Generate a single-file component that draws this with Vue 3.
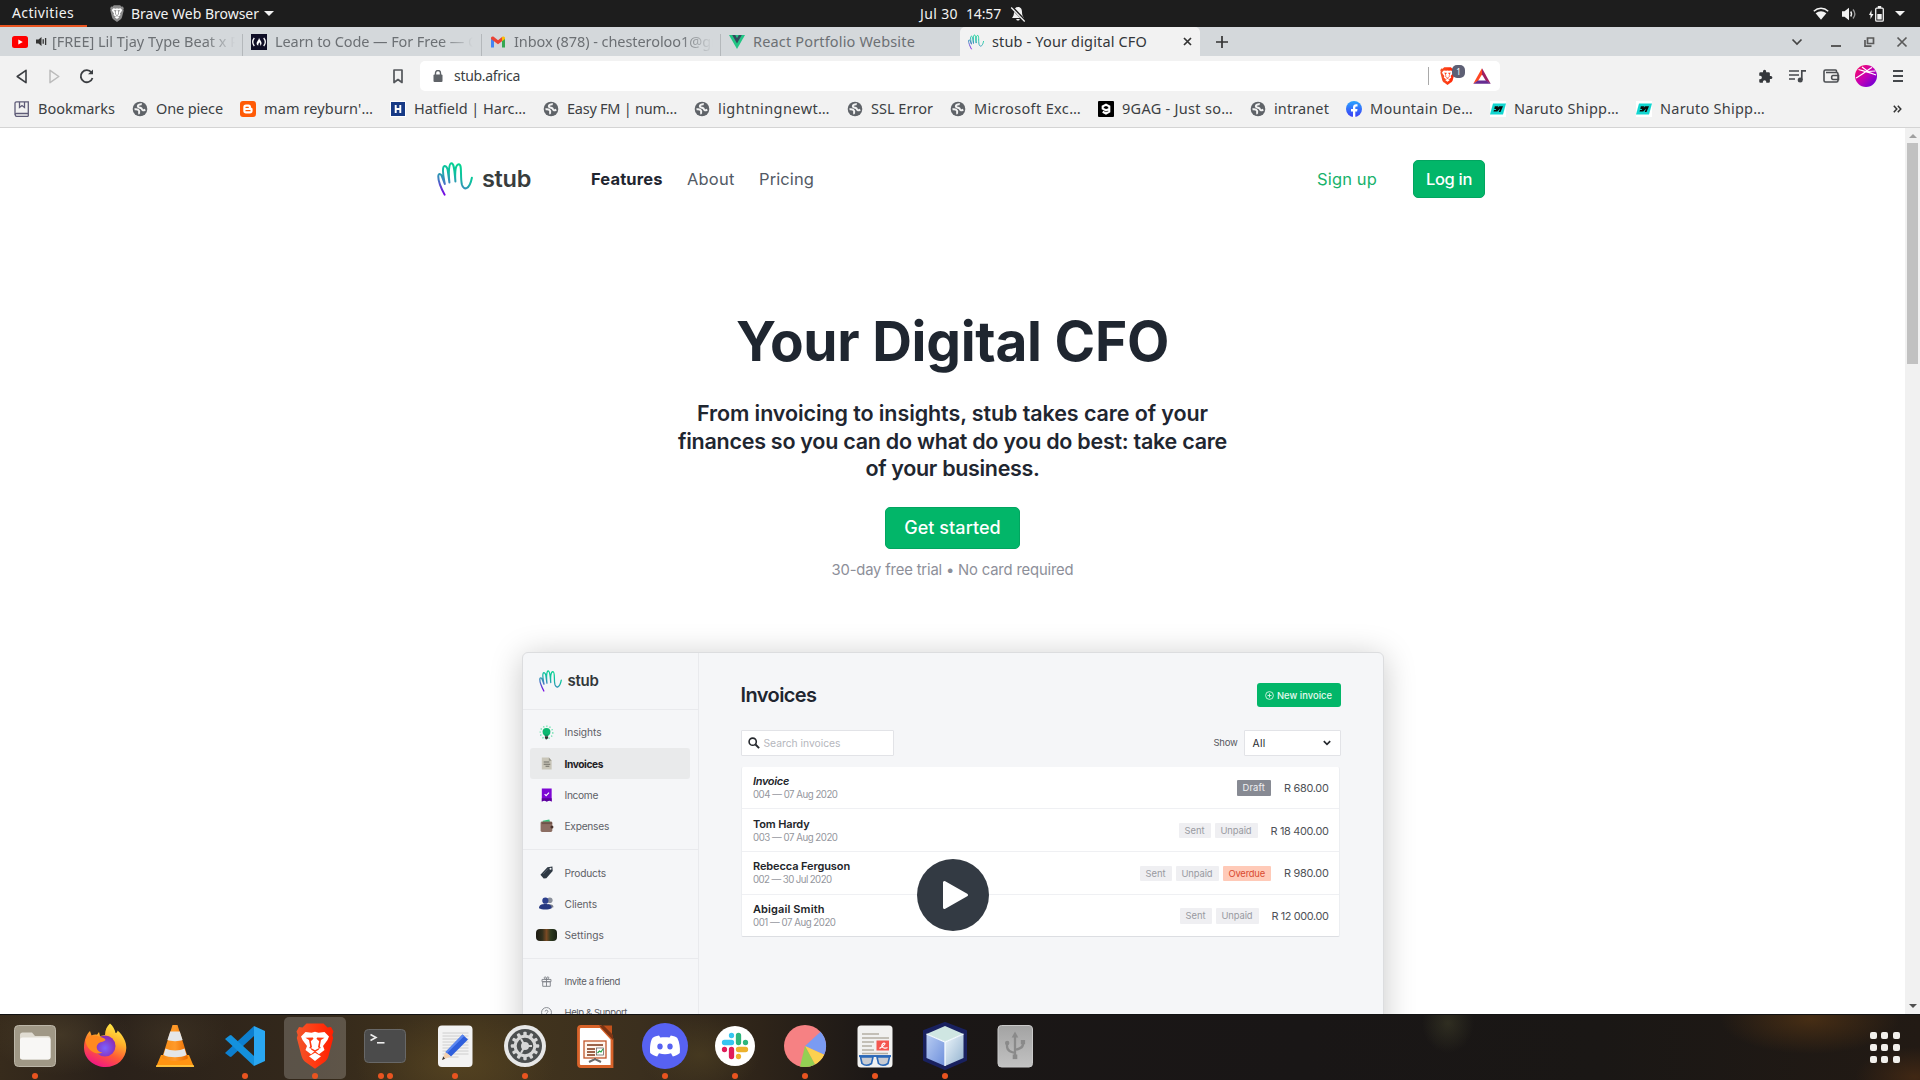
<script setup>
import { nextTick } from 'vue'

// Tracks a label out (or in) so that it takes up the given width.
const vFit = {
  async mounted(el, { value }) {
    await nextTick()
    if (document.fonts) await document.fonts.ready
    const natural = el.getBoundingClientRect().width
    el.style.letterSpacing = `${(value - natural) / el.textContent.trim().length}px`
  }
}

const tabs = [
  { icon: 'youtube', title: '[FREE] Lil Tjay Type Beat x P', w: 187, audio: true },
  { icon: 'fcc', title: 'Learn to Code — For Free — C', w: 202 },
  { icon: 'gmail', title: 'Inbox (878) - chesteroloo1@gr', w: 203 },
  { icon: 'vue', title: 'React Portfolio Website', w: 162, plain: true },
  { icon: 'hand', title: 'stub - Your digital CFO', w: 155, active: true, plain: true }
]

const bookmarks = [
  { icon: 'book', label: 'Bookmarks', w: 77 },
  { icon: 'globe', label: 'One piece', w: 67 },
  { icon: 'blogger', label: "mam reyburn'…", w: 109 },
  { icon: 'hatfield', label: 'Hatfield | Harc…', w: 112 },
  { icon: 'globe', label: 'Easy FM | num…', w: 110 },
  { icon: 'globe', label: 'lightningnewt…', w: 112 },
  { icon: 'globe', label: 'SSL Error', w: 62 },
  { icon: 'globe', label: 'Microsoft Exc…', w: 107 },
  { icon: 'ninegag', label: '9GAG - Just so…', w: 111 },
  { icon: 'globe', label: 'intranet', w: 55 },
  { icon: 'facebook', label: 'Mountain De…', w: 103 },
  { icon: 'naruto', label: 'Naruto Shipp…', w: 105 },
  { icon: 'naruto', label: 'Naruto Shipp…', w: 105 }
]

const sideGroups = [
  [
    { icon: 'bulb', label: 'Insights', w: 37 },
    { icon: 'doc', label: 'Invoices', w: 38.5, active: true },
    { icon: 'income', label: 'Income', w: 33.5 },
    { icon: 'purse', label: 'Expenses', w: 44.5 }
  ],
  [
    { icon: 'tag', label: 'Products', w: 41.5 },
    { icon: 'people', label: 'Clients', w: 32.5 },
    { icon: 'photo', label: 'Settings', w: 39.5 }
  ],
  [
    { icon: 'gift', label: 'Invite a friend', w: 55.5, small: true },
    { icon: 'help', label: 'Help & Support', w: 62.5, small: true }
  ]
]

const SENT = { text: 'Sent', w: 20 }
const UNPAID = { text: 'Unpaid', w: 31 }
const invoices = [
  { name: 'Invoice', nw: 36, italic: true, sub: '004 — 07 Aug 2020', sw: 84.5, tags: [{ text: 'Draft', w: 22.5, kind: 'draft' }], amount: 'R 680.00', aw: 44.5 },
  { name: 'Tom Hardy', nw: 56.5, sub: '003 — 07 Aug 2020', sw: 84.5, tags: [SENT, UNPAID], amount: 'R 18 400.00', aw: 58 },
  { name: 'Rebecca Ferguson', nw: 97, sub: '002 — 30 Jul 2020', sw: 78.5, tags: [SENT, UNPAID, { text: 'Overdue', w: 36.5, kind: 'overdue' }], amount: 'R 980.00', aw: 44.5 },
  { name: 'Abigail Smith', nw: 71.5, sub: '001 — 07 Aug 2020', sw: 82.5, tags: [SENT, UNPAID], amount: 'R 12 000.00', aw: 57 }
]

const dock = [
  { icon: 'd-files', dots: 1 },
  { icon: 'd-firefox', dots: 0 },
  { icon: 'd-vlc', dots: 0 },
  { icon: 'd-code', dots: 1 },
  { icon: 'd-brave', dots: 1, active: true },
  { icon: 'd-term', dots: 2 },
  { icon: 'd-edit', dots: 1 },
  { icon: 'd-gear', dots: 1 },
  { icon: 'd-impress', dots: 0 },
  { icon: 'd-discord', dots: 1 },
  { icon: 'd-slack', dots: 1 },
  { icon: 'd-pie', dots: 1 },
  { icon: 'd-reader', dots: 1 },
  { icon: 'd-cube', dots: 1 },
  { icon: 'd-usb', dots: 0 }
]
const teeth = Array.from({ length: 12 }, (_, i) => i * 30)
</script>

<template>
  <div class="desktop">
    <svg class="sprite" aria-hidden="true">
      <defs>
        <linearGradient id="g-hand" x1="0.7" y1="0" x2="0.15" y2="1">
          <stop offset="0" stop-color="#00d98c" /><stop offset=".35" stop-color="#0fbfa0" />
          <stop offset=".68" stop-color="#3f7fc0" /><stop offset="1" stop-color="#7a00e6" />
        </linearGradient>
        <linearGradient id="g-brave" x1="0" x2="1"><stop offset="0" stop-color="#f1562b" /><stop offset=".5" stop-color="#ff3a12" /><stop offset="1" stop-color="#ff1d00" /></linearGradient>
        <linearGradient id="g-avatar" x1="0" y1="0" x2="1" y2="1"><stop offset="0" stop-color="#ff0a5c" /><stop offset=".5" stop-color="#c500b4" /><stop offset="1" stop-color="#5a00e0" /></linearGradient>
        <linearGradient id="g-fb" x1="0" y1="0" x2="0" y2="1"><stop offset="0" stop-color="#2aa4ff" /><stop offset="1" stop-color="#3d3df5" /></linearGradient>
        <linearGradient id="g-fox" x1=".75" y1="0" x2=".3" y2="1"><stop offset="0" stop-color="#fff04a" /><stop offset=".35" stop-color="#ffb02a" /><stop offset=".65" stop-color="#ff5a36" /><stop offset="1" stop-color="#f0128a" /></linearGradient>
        <radialGradient id="g-orb" cx=".5" cy=".6"><stop offset="0" stop-color="#7a63ff" /><stop offset="1" stop-color="#8a2fb8" /></radialGradient>
        <linearGradient id="g-cone" x1="0" x2="1"><stop offset="0" stop-color="#f58a14" /><stop offset=".5" stop-color="#ff9a2a" /><stop offset="1" stop-color="#e96a00" /></linearGradient>
        <linearGradient id="g-cubeL" x1="0" y1="0" x2="1" y2="1"><stop offset="0" stop-color="#b9cdf2" /><stop offset="1" stop-color="#6d8fdc" /></linearGradient>
        <linearGradient id="g-cubeR" x1="0" y1="0" x2="1" y2="1"><stop offset="0" stop-color="#eef6fb" /><stop offset="1" stop-color="#93b3d0" /></linearGradient>
        <linearGradient id="g-usb" x1="0" y1="0" x2="0" y2="1"><stop offset="0" stop-color="#a3a3a3" /><stop offset="1" stop-color="#c2c2c2" /></linearGradient>
      </defs>

      <symbol id="hand" viewBox="0 0 36 34">
        <path d="M7.6 32.6C4.6 27 1.2 19 1.3 14.4 1.4 11 4 11.4 5 14.6L7.8 22 C6.6 15 4.8 8 6.6 4.8 7.8 3 9.9 4.4 10.6 7.6L12.4 20.4C11.5 12 11.6 1.3 14.4 1.2 17.3 1.2 17.4 9 18.4 19.4 17.8 11 18.2 2.3 21.8 2.2 25.4 2.2 23 15 24.9 22.4 26.6 28.4 32.4 28.6 34.9 15.8" fill="none" stroke="url(#g-hand)" stroke-width="2" stroke-linecap="round" stroke-linejoin="round" />
      </symbol>

      <symbol id="lion-face" viewBox="0 0 38 46">
        <path d="M5 13.500 9.500 9 15.500 9.800 19 8.800l3.500 1L28.500 9l4.500 4.500-1.500 3.500-4.500 6 1.500 4-5.500 4.300-4-3.300-4 3.300L9.500 27l1.500-4-4.500-6zM13 33.300l6-3.500 6 3.500-6 4.700z" fill="#fff" />
        <path d="M9.500 14.800l7.300-.3.700 1.300-2.700 2.400 1.200 5.800-1.500 1.600-1.300-.5 1-1.800-1.200-6.300zM28.500 14.800l-7.300-.3-.7 1.300 2.700 2.400-1.200 5.800 1.500 1.600 1.300-.5-1-1.800 1.200-6.300zM14.500 24.800l4.500 2.400 4.500-2.400-.8 1.900-3.700 2.300-3.700-2.300z" fill="currentColor" />
      </symbol>
      <symbol id="lion" viewBox="0 0 38 46">
        <path d="M10.500 .5h17l4 4 3.500-.5 2.500 4.500-1.200 3.500.9 3-4.700 18c-1 3.500-2.500 5-5 6.800L19 45.800l-8.500-6c-2.500-1.800-4-3.300-5-6.800L.8 15l.9-3L.5 8.500 3 4l3.500.5z" fill="url(#g-brave)" />
        <use href="#lion-face" color="#ff3a12" />
      </symbol>
      <symbol id="lion-grey" viewBox="0 0 38 46">
        <path d="M10.500 .5h17l4 4 3.500-.5 2.500 4.500-1.200 3.500.9 3-4.700 18c-1 3.500-2.500 5-5 6.800L19 45.800l-8.500-6c-2.500-1.800-4-3.300-5-6.800L.8 15l.9-3L.5 8.500 3 4l3.500.5z" fill="#8d8d8d" />
        <use href="#lion-face" color="#777" />
      </symbol>

      <symbol id="youtube" viewBox="0 0 16 16"><rect y="2" width="16" height="12" rx="2.500" fill="#f00" /><path d="M6.300 5.500v5l4.500-2.500z" fill="#fff" /></symbol>
      <symbol id="fcc" viewBox="0 0 16 16"><rect width="16" height="16" fill="#0f0e26" /><path d="M3.300 4C1.300 6.500 1.300 9.500 3.300 12M12.700 4c2 2.500 2 5.500 0 8" stroke="#fff" stroke-width="1.300" fill="none" /><path d="M8 3.800C8.500 6 11 7.500 10.500 9.800 10.200 11 9.600 11.500 9 11.800 9.800 9.800 8.800 9.400 8.400 8.300 7.800 9.500 7 10.200 7.300 11.800 5.600 11 5.200 9.500 6 8c1-1.700 1.800-2.200 2-4.200z" fill="#fff" /></symbol>
      <symbol id="gmail" viewBox="0 0 16 16"><path d="M1 13.500V4l3 2v7.500z" fill="#4285f4" /><path d="M12 13.500V6l3-2v9.500z" fill="#34a853" /><path d="M1 4.500C.8 2.600 2.600 2 4 3l4 3.200L12 3v4.200L8 10.300 4 7.200 1 5z" fill="#ea4335" /><path d="M12 3c1.500-1 3.200-.3 3 1.500V5l-3 2.300z" fill="#fbbc04" /></symbol>
      <symbol id="vue" viewBox="0 0 16 16"><path d="M0 1h16L8 15z" fill="#22c584" /><path d="M3.200 1h3L8 4.200 9.800 1h3L8 9.400z" fill="#35495e" /></symbol>
      <symbol id="speaker" viewBox="0 0 11 11"><path d="M0 3.500h2.500L5.500 1v9l-3-2.500H0z" fill="#333" /><path d="M7.200 3.300v4.400M9.600 2v7" stroke="#333" stroke-width="1.300" /></symbol>

      <symbol id="book" viewBox="0 0 16 16"><path d="M2.500 15.300h11.900M2.500 15.300C1 15.300.7 12.500 2.500 12.500h11.800V.8H2.600C1.600.8 1 1.300 1 2.300V14M14.300 12.500v2.800M5.500 1v5.500L8 4.500l2.500 2V1" fill="none" stroke="#5f5c78" stroke-width="1.300" /></symbol>
      <symbol id="globe" viewBox="0 0 16 16"><circle cx="8" cy="8" r="7.300" fill="#5f6368" /><path d="M9.800 3.300C8 2.800 5.800 4 5.800 5.300c0 1.700 2.500 1.300 3.500 2 .8.700.4 1.700 1.600 2 1 .2 1.600-.3 2.300-.8M2.500 8.300c1.800-.3 4 .2 4.600 1.500.4 1-.6 2.300.4 3.200" stroke="#f2f2f2" stroke-width="2" fill="none" /></symbol>
      <symbol id="blogger" viewBox="0 0 16 16"><rect width="16" height="16" rx="3" fill="#ff5a05" /><path d="M6 3.500h2.500a2.500 2.500 0 0 1 2.500 2.500c0 1.300 1.600.7 1.600 2v1.800a2.700 2.700 0 0 1-2.700 2.700H6a2.700 2.700 0 0 1-2.700-2.700V6.200A2.700 2.700 0 0 1 6 3.500z" fill="#fff" /><path d="M6 6.300h2.300M6 9.700h4" stroke="#ff5a05" stroke-width="1.300" stroke-linecap="round" /></symbol>
      <symbol id="hatfield" viewBox="0 0 16 16"><rect width="16" height="16" fill="#fff" /><rect x="1" y="1" width="14" height="14" fill="#173a86" /><path d="M5.700 4v8M10.300 4v8M5.700 8h4.600" stroke="#fff" stroke-width="1.900" /></symbol>
      <symbol id="ninegag" viewBox="0 0 16 16"><rect width="16" height="16" rx="1" fill="#000" /><path d="M11.300 8 8 9.300 4.700 7.600V5.300L8 3.700l3.300 1.600v5.400L8 12.500l-3.300-1.700" fill="none" stroke="#fff" stroke-width="2.100" /></symbol>
      <symbol id="facebook" viewBox="0 0 16 16"><circle cx="8" cy="8" r="8" fill="url(#g-fb)" /><path d="M7 16v-5.500H5V8h2V6.200C7 4.200 8.300 3.200 10 3.200l1.500.1v2.100h-1C9.600 5.400 9.300 5.900 9.300 6.600V8h2.200l-.4 2.500H9.300V16z" fill="#fff" /></symbol>
      <symbol id="naruto" viewBox="0 0 16 16"><rect width="16" height="16" fill="#fff" /><path d="M3 2.500h13l-3 11H0z" fill="#12d6d0" /><path d="M4.800 5.300h3.500l-.6 1.500 1.500-1.500H13L10.500 11H8.700l1.500-3.500L7.300 10.500H3.500l.5-1.500h1.800l.4-.9H4.300z" fill="#0a0a0a" /></symbol>

      <symbol id="bulb" viewBox="0 0 16 16"><circle cx="8" cy="8" r="6.700" fill="none" stroke="#5fe0a8" stroke-width="1.500" stroke-dasharray="1.200 2.200" /><circle cx="8" cy="7.300" r="4.200" fill="#0bb870" /><path d="M5.500 10h5L9.500 12h-3z" fill="#0a9c60" /><path d="M6.300 12h3.400v2L8 15.500 6.300 14z" fill="#333" /></symbol>
      <symbol id="doc" viewBox="0 0 16 16"><path d="M3 1.500h7.500L13.500 5v9.500H3z" fill="#c9c6b9" /><path d="M10.500 1.500V5h3z" fill="#98968b" /><path d="M5 6.500h6M5 8.700h7M7 11h4" stroke="#6f6d66" stroke-width="1.100" /></symbol>
      <symbol id="income" viewBox="0 0 16 16"><path d="M3 1.500h10.500v14l-2.500-1.200-2.700 1.200-2.800-1.200L3 15.500z" fill="#7d06d4" /><path d="M3 12h10.500v3.500L11 14.300l-2.700 1.200-2.800-1.200L3 15.500z" fill="#5b0299" /><path d="M6 7.500l1.600 1.800L10.700 6" stroke="#fff" stroke-width="1.200" fill="none" /></symbol>
      <symbol id="purse" viewBox="0 0 16 16"><path d="M4 3l7-1.500L12 5H4z" fill="#34c27b" /><rect x="1.700" y="3.800" width="12.500" height="11" rx="1.500" fill="#8c6e63" /><path d="M3 4.500h11v2H3z" fill="#6f5248" /><circle cx="13.800" cy="9.500" r="1.600" fill="#4a322b" /></symbol>
      <symbol id="tag" viewBox="0 0 16 16"><path d="M1.500 10.500 9 2.300l5.300-.6.300 4.800L7.800 14 5 14.500z" fill="#2e3843" /><circle cx="12.300" cy="4" r="1.100" fill="#f5f6f8" /><path d="M4.500 9.500 9.500 4" stroke="#55616e" stroke-width="1" /></symbol>
      <symbol id="people" viewBox="0 0 16 16"><circle cx="11.500" cy="4.500" r="3" fill="#8a8f9b" /><path d="M9 9c4-1 6.500.5 6.500 3L11 13z" fill="#7a7f8c" /><circle cx="6.800" cy="5" r="3.300" fill="#2c3f8c" /><path d="M0 13c0-4 3.500-4.500 6.800-4.500S13.500 9 13.500 13c-3 2-10.500 2-13.500 0z" fill="#263880" /></symbol>
      <symbol id="gift" viewBox="0 0 16 16"><path d="M1.500 5h13v3.300h-13zM2.500 8.300h11V15h-11zM8 5v10M8 5C4 5 4 1.200 6 1.200S8 5 8 5s0-3.800 2-3.800S12 5 8 5z" fill="none" stroke="#7d8087" stroke-width="1.300" /></symbol>
      <symbol id="help" viewBox="0 0 16 16"><circle cx="8" cy="8" r="7.200" fill="none" stroke="#7d8087" stroke-width="1.300" /><path d="M6 6.500C6 4 10 4 10 6.500 10 8 8 8 8 10M8 11v1.300" fill="none" stroke="#7d8087" stroke-width="1.300" /></symbol>

      <symbol id="d-files" viewBox="0 0 48 48"><rect x="3.500" y="3.500" width="41" height="41" rx="4" fill="#a09886" stroke="#bcb6a8" /><path d="M9 13c0-1.500 1-2.500 2.500-2.500H21l3 3.500h13c1.500 0 2.500 1 2.500 2.500V35c0 1.500-1 2.500-2.500 2.500H11.500C10 37.500 9 36.500 9 35z" fill="#e0dcd2" /><rect x="9" y="15.500" width="30.500" height="22" rx="2.500" fill="#f8f7f5" /></symbol>
      <symbol id="d-firefox" viewBox="0 0 48 48"><path d="M29 1.500c3 2.500 5 6.500 5.500 9.500C36 11 36.500 9.500 36.500 8.500 42 13 45.500 20 45.300 26 45 37 36 45 24.500 45S3 37 3 25.500C3 19 5 13 9 9l1.500 4.500c2-1 4-1 5.500-.8L18 10l1 4 5-1C24 8 26 4 29 1.500z" fill="url(#g-fox)" /><circle cx="24" cy="24" r="10.500" fill="url(#g-orb)" /><path d="M4.500 18C7 13 13 12.500 18 14.500c3 1 6 1.500 6.500 3.500-2 2.500-6 1.500-7.500 4-3 3 -.5 8.500 4.500 8.500C15 34 5 28 4.500 18z" fill="#ff8a1f" /></symbol>
      <symbol id="d-vlc" viewBox="0 0 48 48"><path d="M10 33h28l5 12H5z" fill="#ff9412" /><path d="M5.500 43h37l.7 2H5z" fill="#ffc03a" /><path d="M21.500 3h5l10.500 33c-3 4-23 4-26 0z" fill="url(#g-cone)" /><path d="M19.200 9.500h9.600l2.800 8.500c-3 1.500-12 1.500-15.200 0zM14.500 26.500c5 2.500 14.500 2.500 19 0l2 6.500c-5 3-18 3-23 0z" fill="#e4e6e8" /></symbol>
      <symbol id="d-code" viewBox="0 0 48 48"><path d="M33 4 44 9v30l-11 5z" fill="#2aa7f2" /><path d="M33 4v10L10 35 8.500 34.500 4 31z" fill="#0d7fcf" /><path d="M33 44V34L10 13l-1.500.5L4 17z" fill="#1491dd" /></symbol>
      <symbol id="d-brave" viewBox="0 0 48 48"><use href="#lion" x="5" y="1" width="38" height="46" /></symbol>
      <symbol id="d-term" viewBox="0 0 48 48"><rect x="3.500" y="7.500" width="41" height="33" rx="4" fill="#4b4b4b" stroke="#686868" /><path d="M9.500 12.500l5.500 3-5.500 3" fill="none" stroke="#eee" stroke-width="1.600" /><path d="M16 20.800h7.500" stroke="#eee" stroke-width="1.600" /></symbol>
      <symbol id="d-edit" viewBox="0 0 48 48"><rect x="7" y="3.500" width="34.500" height="41.500" rx="4" fill="#f3f3f3" /><path d="M11.500 11h26M11.500 14h26M11.500 17h26M11.500 20h26M11.500 23h26M11.500 26h26M11.500 29h26M11.500 32h26M11.500 35h16" stroke="#c4c4c4" stroke-width=".8" /><path d="M31.500 12.500 37 17.500 20 34.500 14.500 30z" fill="#2f5fdc" /><path d="M14.500 30 20 34.500 11 38z" fill="#f2cfae" /><path d="M12.300 34.500 14 36.800 11 38z" fill="#333" /><path d="M31.500 12.500 14.500 30 16 31.300 33.300 14z" fill="#5b87f0" /></symbol>
      <symbol id="d-gear" viewBox="0 0 48 48">
        <circle cx="24" cy="24" r="21" fill="#e7e7e7" /><circle cx="24" cy="24" r="17" fill="#4c4f50" />
        <rect v-for="a in teeth" :key="a" x="22.300" y="9.800" width="3.400" height="5" rx="1" fill="#d6d6d6" :transform="`rotate(${a} 24 24)`" />
        <circle cx="24" cy="24" r="9.800" fill="none" stroke="#d6d6d6" stroke-width="3" /><circle cx="24" cy="24" r="4" fill="#d6d6d6" /><path d="M24 24h7M24 24l-4 7M24 24l-4-7" stroke="#d6d6d6" stroke-width="2" />
      </symbol>
      <symbol id="d-impress" viewBox="0 0 48 48"><path d="M10 4.500h19.500L41 17v27.500H10c-1.500 0-2.500-1-2.500-2.500V7c0-1.500 1-2.500 2.500-2.500z" fill="#fff" stroke="#d8632a" stroke-width="2.800" /><path d="M32 3.500h9v9z" fill="#c2511b" /><path d="M28 3.500 42 18v-5L32.500 3.500z" fill="#7c3414" /><rect x="13" y="19" width="22" height="17" fill="#fff6ee" stroke="#c0562a" stroke-width="1.300" /><path d="M16 23h16M16 27h8M16 30h8M16 33h8" stroke="#7c3414" stroke-width="1.700" /><rect x="25.500" y="26" width="7" height="7" fill="#fff" stroke="#555" stroke-width=".7" /><path d="M26.500 31l2-2 1.500 1 2-3" stroke="#2aa84a" stroke-width="1.200" fill="none" /><path d="M24 36v2M18 40l6-3 6 3" stroke="#6a6a6a" stroke-width="2" fill="none" /></symbol>
      <symbol id="d-discord" viewBox="0 0 48 48"><circle cx="24" cy="24" r="23" fill="#5762f2" /><path d="M18 13.500c-3 .5-5.500 1.500-6.500 2.500C9 20 8.800 26 9.200 31c2 1.800 4.700 3 7 3.500l1.800-3.300c4 1.300 8 1.300 12 0l1.800 3.300c2.300-.5 5-1.700 7-3.500.6-5-.3-11-2.500-15-1-1-3.500-2-6.500-2.500l-1.300 2c-3-.4-6-.4-9.200 0z" fill="#fff" /><ellipse cx="19" cy="24.500" rx="2.700" ry="3" fill="#5762f2" /><ellipse cx="29" cy="24.500" rx="2.700" ry="3" fill="#5762f2" /></symbol>
      <symbol id="d-slack" viewBox="0 0 48 48"><circle cx="24" cy="24" r="20" fill="#fff" /><g stroke-width="5.300" stroke-linecap="round"><path d="M13.500 20.500h7M20.500 13.500v.1" stroke="#36c5f0" /><path d="M27.500 13.500v7M34.500 20.500v.1" stroke="#2eb67d" /><path d="M27.500 27.500h7M27.500 34.500v.1" stroke="#ecb22e" /><path d="M20.500 27.500v7M13.500 27.500v.1" stroke="#e01e5a" /></g></symbol>
      <symbol id="d-pie" viewBox="0 0 48 48"><circle cx="24" cy="24" r="21" fill="#f68183" /><path d="M24 24 39.500 9.800A21 21 0 0 1 43.200 32.800z" fill="#7a9bf2" /><path d="M24 24 43.200 32.800A21 21 0 0 1 34 42.500z" fill="#fcd14f" /><path d="M24 24 34 42.500A21 21 0 0 1 19 44.400z" fill="#93d053" /></symbol>
      <symbol id="d-reader" viewBox="0 0 48 48"><rect x="6.500" y="3.500" width="35" height="42" rx="3.500" fill="#f1f1f0" /><path d="M11 12h17M11 16h27M11 20h12M11 24h10M11 28h12M11 31.500h26" stroke="#b4afa2" stroke-width="1.500" /><rect x="25.500" y="18.500" width="12.500" height="10" fill="#f4564f" /><path d="M28.500 26.500c1-1 6-3.500 5.500-5-1-1.500-4 1-3 3s4 2 5.500 1" fill="none" stroke="#fff" stroke-width="1.200" /><path d="M8 34h32" stroke="#1d5fb5" stroke-width="1.800" /><path d="M9.500 35h12.500l-1.500 6.500c-3 2-7 2-9.500 0zM26 35h12.500L37 41.500c-3 2-7 2-9.500 0z" fill="#c9ccd2" stroke="#2a68b8" stroke-width="1.600" /></symbol>
      <symbol id="d-cube" viewBox="0 0 48 48"><path d="M24 1 45 9v29L24 47 3 38V9z" fill="#19215f" stroke="#19215f" stroke-width="2" stroke-linejoin="round" /><path d="M24 4 42.500 12 24 20 5.500 12z" fill="#cfe6e2" /><path d="M5.500 12 24 20v24L5.500 36z" fill="url(#g-cubeL)" /><path d="M42.500 12 24 20v24l18.500-8z" fill="url(#g-cubeR)" /><path d="M5.500 12 24 20l18.500-8M24 20v24" stroke="#f4fbff" stroke-width="1.300" fill="none" /></symbol>
      <symbol id="d-usb" viewBox="0 0 48 48"><rect x="7" y="3.500" width="34.500" height="41.500" rx="3.500" fill="url(#g-usb)" stroke="#c9c9c9" /><g stroke="#8a8a8a" stroke-width="2.300" fill="none"><path d="M24 14v22M24 31c-4-1-8-2-8-7v-3M24 28c4-1 8-2 8-6v-2" /></g><path d="M24 9.500l3.300 6h-6.600z" fill="#8a8a8a" /><circle cx="16.200" cy="21" r="2.200" fill="#8a8a8a" /><rect x="29.800" y="18" width="4.300" height="4.300" fill="#8a8a8a" /><rect x="21.700" y="32.500" width="4.600" height="4.600" fill="#8a8a8a" /></symbol>
    </svg>

    <header class="topbar">
      <div class="activities"><span v-fit="62">Activities</span></div>
      <div class="appmenu">
        <svg width="14" height="17"><use href="#lion-grey" /></svg>
        <span v-fit="128">Brave Web Browser</span>
        <i class="caret"></i>
      </div>
      <div class="clock">
        <span v-fit="38">Jul 30</span><span v-fit="35">14:57</span>
        <svg width="16" height="16" viewBox="0 0 16 16"><path d="M8 1C5 1 4 3.500 4 6c0 3-.7 4.500-2 6h12c-1.300-1.500-2-3-2-6 0-2.500-1-5-4-5zM6.300 13h3.400c0 2-3.400 2-3.400 0z" fill="#f2f2f2" /><path d="M1.500 1l13.500 14" stroke="#1d1d1d" stroke-width="3" /><path d="M1.200 1.500l13.500 14" stroke="#f2f2f2" stroke-width="1.300" /></svg>
      </div>
      <div class="status">
        <svg width="16" height="14" viewBox="0 0 16 14"><path d="M.8 4.300C5 .3 11 .3 15.200 4.300" stroke="#f2f2f2" stroke-width="1.500" fill="none" /><path d="M2.600 6.300C6 3.500 10 3.500 13.400 6.300L8 12.800z" fill="#f2f2f2" /></svg>
        <svg width="15" height="14" viewBox="0 0 15 14"><path d="M0 4.300h2.500L7 .8v12.400L2.500 9.700H0z" fill="#f2f2f2" /><path d="M8.700 4.500c1 1.500 1 3.500 0 5" stroke="#f2f2f2" stroke-width="1.400" fill="none" /><path d="M11 2.500c2.500 3 2.500 6 0 9" stroke="#999" stroke-width="1.300" fill="none" /></svg>
        <svg class="batt" width="15" height="16" viewBox="0 0 15 16"><path d="M2.500 4v4h2L1.500 13V9H0z" fill="#f2f2f2" /><rect x="6.700" y="2.200" width="7.600" height="13" rx="1" fill="none" stroke="#f2f2f2" stroke-width="1.300" /><path d="M8.800 0h3.400v2H8.800zM8.300 8h4.400v5.500H8.300z" fill="#f2f2f2" /></svg>
        <i class="caret"></i>
      </div>
    </header>

    <div class="tabstrip">
      <div v-for="(t, i) in tabs" :key="t.title" class="tab" :class="{ active: t.active, ruled: i < 3, plain: t.plain }">
        <svg class="fav" width="16" height="16"><use :href="'#' + t.icon" /></svg>
        <svg v-if="t.audio" class="audio" width="11" height="11"><use href="#speaker" /></svg>
        <div class="tab-title"><span v-fit="t.w">{{ t.title }}</span></div>
        <svg v-if="t.active" class="tab-close" width="9" height="9" viewBox="0 0 9 9"><path d="M1 1l7 7M8 1L1 8" stroke="#333" stroke-width="1.700" /></svg>
      </div>
      <svg class="newtab" width="14" height="14" viewBox="0 0 14 14"><path d="M7 1v12M1 7h12" stroke="#333" stroke-width="1.700" /></svg>
      <div class="winctl">
        <svg width="12" height="12" viewBox="0 0 12 12"><path d="M1.500 3.500 6 8l4.500-4.500" fill="none" stroke="#444" stroke-width="1.700" /></svg>
        <svg width="12" height="12" viewBox="0 0 12 12"><path d="M1 10h10" stroke="#5a5a5a" stroke-width="2" /></svg>
        <svg width="12" height="12" viewBox="0 0 12 12"><path d="M4.500 2h6v5.500h-6zM2 4v6.200h6.500" fill="none" stroke="#5a5a5a" stroke-width="1.700" /></svg>
        <svg width="12" height="12" viewBox="0 0 12 12"><path d="M1.500 1.500l9 9M10.500 1.500l-9 9" stroke="#5a5a5a" stroke-width="1.700" /></svg>
      </div>
    </div>

    <div class="toolbar">
      <div class="navbtns">
        <svg width="12" height="15" viewBox="0 0 12 15"><path d="M10 1.300v12.400L1.200 7.500z" fill="none" stroke="#3b3e42" stroke-width="1.600" stroke-linejoin="round" /></svg>
        <svg width="12" height="15" viewBox="0 0 12 15"><path d="M2 1.300v12.400l8.800-6.200z" fill="none" stroke="#bcbcbc" stroke-width="1.500" stroke-linejoin="round" /></svg>
        <svg width="15" height="15" viewBox="0 0 15 15"><path d="M12.500 3.500A6 6 0 1 0 13.500 9" fill="none" stroke="#3b3e42" stroke-width="1.800" /><path d="M9 5.300h5V.5z" fill="#3b3e42" /></svg>
      </div>
      <svg class="mark" width="10" height="15" viewBox="0 0 10 15"><path d="M1 1h8v12.500L5 10.500l-4 3z" fill="none" stroke="#54575b" stroke-width="1.700" stroke-linejoin="round" /></svg>
      <div class="omnibox">
        <svg width="10" height="12" viewBox="0 0 10 12"><rect x=".5" y="4.500" width="9" height="7.500" rx="1" fill="#5f6368" /><path d="M2.500 5V3a2.500 2.500 0 0 1 5 0v2" fill="none" stroke="#5f6368" stroke-width="1.400" /></svg>
        <span v-fit="66" class="url">stub.africa</span>
        <div class="shields">
          <svg width="15" height="18"><use href="#lion" /></svg>
          <b class="badge">1</b>
        </div>
        <svg class="bat" width="18" height="16" viewBox="0 0 18 16"><path d="M9 .3.3 15.700 5 13l4-6.500z" fill="#ff4724" /><path d="M9 .3l8.700 15.400L13 13 9 6.500z" fill="#9e1f63" /><path d="M.3 15.700h17.400L13 12.500H5z" fill="#662d91" /></svg>
      </div>
      <div class="ext">
        <svg width="15" height="15" viewBox="0 0 24 24"><path d="M20.500 11H19V7a2 2 0 0 0-2-2h-4V3.500a2.500 2.500 0 0 0-5 0V5H4a2 2 0 0 0-2 2v3.800h1.500a2.700 2.700 0 0 1 0 5.400H2V20c0 1.100.9 2 2 2h3.800v-1.500a2.700 2.700 0 0 1 5.400 0V22H17a2 2 0 0 0 2-2v-4h1.500a2.500 2.500 0 0 0 0-5z" fill="#34373b" /></svg>
        <svg width="17" height="14" viewBox="0 0 17 14"><path d="M0 2h10M0 6h10M0 10h6" stroke="#45484c" stroke-width="1.700" /><path d="M12.800 11V1.800H17" fill="none" stroke="#45484c" stroke-width="1.700" /><circle cx="11.200" cy="11" r="2.500" fill="#45484c" /></svg>
        <svg class="wallet" width="17" height="14" viewBox="0 0 17 14"><path d="M13.500 3.500V2c0-.6-.4-1-1-1H2.500C1.500 1 1 1.500 1 2.500v9c0 1 .5 1.500 1.500 1.500h11c1 0 1.500-.5 1.500-1.500V5c0-1-.5-1.500-1.500-1.500H3M15.500 6.500H10c-1.800 0-1.800 4 0 4h5.500z" fill="none" stroke="#4b4e52" stroke-width="1.600" /></svg>
        <svg width="22" height="22" viewBox="0 0 22 22"><circle cx="11" cy="11" r="11" fill="url(#g-avatar)" /><path d="M1 13C7 10 13 4.500 17 2.500M3.500 4.500c5 1.500 11 3 17.500 5.500M7 2l6 4.500L20.500 6" stroke="#fff" stroke-width="1.200" fill="none" /></svg>
        <svg width="10" height="12" viewBox="0 0 10 12"><path d="M0 1h10M0 6h10M0 11h10" stroke="#45484c" stroke-width="1.800" /></svg>
      </div>
    </div>

    <div class="bookmarks">
      <div v-for="(b, i) in bookmarks" :key="i" class="bm">
        <svg width="16" height="16"><use :href="'#' + b.icon" /></svg>
        <div class="bm-label" :style="{ width: b.w + 'px' }"><span v-fit="b.w">{{ b.label }}</span></div>
      </div>
      <svg class="more" width="9" height="8" viewBox="0 0 9 8"><path d="M.8.8 3.800 4 .8 7.200M4.800.8 7.800 4 4.800 7.200" fill="none" stroke="#333" stroke-width="1.500" /></svg>
    </div>

    <div class="viewport">
      <main class="page">
        <nav class="nav">
          <div class="brand"><svg width="36" height="34"><use href="#hand" /></svg><span v-fit="49">stub</span></div>
          <div class="links">
            <a class="on"><span v-fit="71.5">Features</span></a>
            <a><span v-fit="47.5">About</span></a>
            <a><span v-fit="55">Pricing</span></a>
          </div>
          <a class="signup"><span v-fit="60">Sign up</span></a>
          <button class="login"><span v-fit="46">Log in</span></button>
        </nav>

        <section class="hero">
          <h1><span v-fit="433">Your Digital CFO</span></h1>
          <p class="lead">
            <span v-fit="511">From invoicing to insights, stub takes care of your</span>
            <span v-fit="549">finances so you can do what do you do best: take care</span>
            <span v-fit="174">of your business.</span>
          </p>
          <button class="cta"><span v-fit="96.500">Get started</span></button>
          <p class="note"><span v-fit="242">30-day free trial • No card required</span></p>
        </section>

        <section class="preview">
          <aside class="side">
            <div class="side-brand"><svg width="23" height="22"><use href="#hand" /></svg><span v-fit="31">stub</span></div>
            <div v-for="(g, gi) in sideGroups" :key="gi" class="group">
              <div v-for="it in g" :key="it.label" class="item" :class="{ active: it.active, small: it.small }">
                <div class="item-icon">
                  <i v-if="it.icon === 'photo'" class="photo"></i>
                  <svg v-else :width="it.small ? 11 : 15" :height="it.small ? 11 : 15"><use :href="'#' + it.icon" /></svg>
                </div>
                <span v-fit="it.w">{{ it.label }}</span>
              </div>
            </div>
          </aside>
          <div class="content">
            <div class="head">
              <h2><span v-fit="76">Invoices</span></h2>
              <button class="new">
                <svg width="9" height="9" viewBox="0 0 9 9"><circle cx="4.500" cy="4.500" r="3.900" fill="none" stroke="#d8f5e7" stroke-width=".9" /><path d="M4.500 2.500v4M2.500 4.500h4" stroke="#d8f5e7" stroke-width=".9" /></svg>
                <span v-fit="55">New invoice</span>
              </button>
            </div>
            <div class="filters">
              <div class="search">
                <svg width="12" height="12" viewBox="0 0 12 12"><circle cx="4.700" cy="4.700" r="3.600" fill="none" stroke="#26292e" stroke-width="1.600" /><path d="M7.500 7.500l3.600 3.700" stroke="#26292e" stroke-width="1.900" /></svg>
                <span v-fit="77">Search invoices</span>
              </div>
              <span v-fit="24" class="show">Show</span>
              <div class="select">
                <span v-fit="13">All</span>
                <svg width="8" height="6" viewBox="0 0 8 6"><path d="M.8 1.200 4 4.300 7.200 1.200" fill="none" stroke="#26292e" stroke-width="1.700" /></svg>
              </div>
            </div>
            <div class="table">
              <div v-for="r in invoices" :key="r.sub" class="row">
                <div class="who">
                  <div class="name" :class="{ italic: r.italic }"><span v-fit="r.nw">{{ r.name }}</span></div>
                  <div class="sub"><span v-fit="r.sw">{{ r.sub }}</span></div>
                </div>
                <div class="tags">
                  <div v-for="t in r.tags" :key="t.text" class="tag" :class="t.kind"><span v-fit="t.w">{{ t.text }}</span></div>
                </div>
                <div class="amount" :style="{ width: r.aw + 'px' }"><span v-fit="r.aw">{{ r.amount }}</span></div>
              </div>
            </div>
          </div>
          <button class="play" aria-label="Play">
            <svg width="72" height="72" viewBox="0 0 72 72"><circle cx="36" cy="36" r="36" fill="#333a43" /><path d="M27.500 23.500v25L49.500 36z" fill="#fff" stroke="#fff" stroke-width="3" stroke-linejoin="round" /></svg>
          </button>
        </section>
      </main>
      <div class="scrollbar"><i class="up"></i><i class="thumb"></i><i class="down"></i></div>
    </div>

    <footer class="dock">
      <div v-for="d in dock" :key="d.icon" class="app">
        <div class="tile" :class="{ active: d.active }">
          <svg width="48" height="48"><use :href="'#' + d.icon" /></svg>
          <div class="dots"><i v-for="n in d.dots" :key="n"></i></div>
        </div>
      </div>
      <div class="grid"><i v-for="n in 9" :key="n"></i></div>
    </footer>
  </div>
</template>

<style>
body { margin: 0; overflow: hidden; }
</style>

<style scoped>
.desktop { width: 1920px; height: 1080px; display: flex; flex-direction: column; overflow: hidden; background: #fff; font-family: "Noto Sans", "Open Sans", sans-serif; font-size: 14.5px; color: #3c3f43; }
.desktop * { box-sizing: border-box; }
.sprite { position: absolute; width: 0; height: 0; }
svg { display: block; flex: none; }
span { display: inline-block; white-space: nowrap; }
button { border: 0; margin: 0; padding: 0; font: inherit; color: inherit; background: none; }

.topbar { height: 27px; flex: none; background: #1d1d1d; color: #f2f2f2; display: flex; align-items: center; font-size: 14px; line-height: 26px; }
.activities { width: 87px; height: 27px; padding-left: 12px; border-bottom: 2px solid #e95420; }
.appmenu { display: flex; align-items: center; gap: 7px; margin-left: 23px; height: 26px; }
.appmenu .caret { margin-left: -2px; }
.caret { width: 0; height: 0; border: 5px solid transparent; border-top: 5px solid #f2f2f2; border-bottom: 0; }
.clock { display: flex; align-items: center; margin-left: 646px; gap: 9px; height: 25px; }
.clock span + span { margin-left: -1px; }
.status { display: flex; align-items: center; gap: 13px; margin-left: auto; margin-right: 15px; height: 26px; }
.status .batt { margin-left: -1px; margin-right: -2px; }

.tabstrip { height: 29px; flex: none; background: #d4d8db; display: flex; align-items: center; padding-left: 4px; }
.tab { width: 239px; height: 29px; display: flex; align-items: center; padding: 0 5px 0 8px; color: #6c7074; position: relative; }
.tab.ruled::after { content: ""; position: absolute; right: 0; top: 7px; bottom: 0; width: 1px; background: #b4b8bb; }
.tab.active { background: #f2f2f2; border-radius: 5px 5px 0 0; color: #33363a; width: 240px; }
.audio { margin-left: 8px; margin-right: -3px; }
.tab-title { margin-left: 8px; padding-bottom: 1px; flex: 1; line-height: 26px; white-space: nowrap; -webkit-mask-image: linear-gradient(90deg, #000 82%, transparent 98%); mask-image: linear-gradient(90deg, #000 82%, transparent 98%); }
.tab.plain .tab-title { -webkit-mask-image: none; mask-image: none; }
.tab-close { margin-right: 3px; }
.newtab { margin-left: 15px; }
.winctl { margin-left: auto; display: flex; margin-right: 12px; }
.winctl svg { margin-left: 21px; }
.winctl svg:nth-child(1) { margin-right: 1px; }
.winctl svg:nth-child(2) { margin-left: 26px; }

.toolbar { height: 40px; flex: none; background: #f2f2f2; display: flex; align-items: center; }
.navbtns { display: flex; align-items: center; gap: 20px; padding-left: 16px; }
.navbtns svg:last-child { margin-left: -1px; }
.mark { margin-left: 299px; }
.omnibox { width: 1080px; height: 30px; margin-left: 17px; background: #fff; border-radius: 5px; display: flex; align-items: center; padding-left: 13px; font-size: 14px; }
.url { margin-left: 11px; margin-bottom: 1px; }
.shields { position: relative; margin-left: auto; border-left: 1px solid #a9a9a9; padding-left: 11px; }
.badge { position: absolute; left: 23px; top: -2px; width: 13px; height: 13px; border-radius: 5px; background: #5d5f74; color: #fff; font-size: 8px; line-height: 13px; text-align: center; font-weight: 400; }
.bat { margin-left: 18px; margin-right: 9px; }
.ext { margin-left: auto; margin-right: 17px; display: flex; align-items: center; gap: 16px; }
.ext .wallet { margin-left: 1px; margin-right: -1px; }

.bookmarks { height: 32px; flex: none; background: #f2f2f2; border-bottom: 1px solid #d4d4d4; display: flex; align-items: center; padding: 0 18px 5px 14px; gap: 17px; font-size: 14.500px; }
.bm { display: flex; align-items: center; gap: 8px; line-height: 20px; }
.bm-label { padding-bottom: 2px; }
.more { margin-left: auto; }

.viewport { height: 887px; flex: none; display: flex; overflow: hidden; }
.page { width: 1905px; height: 886px; overflow: hidden; font-family: Inter, "Liberation Sans", sans-serif; color: #1f2630; background: #fff; display: flex; flex-direction: column; align-items: center; }
.nav { width: 1048px; margin-left: 17px; height: 38px; margin-top: 32px; display: flex; align-items: center; font-size: 16.500px; color: #535a65; }
.nav a { padding-bottom: 1px; }
.brand { display: flex; align-items: center; gap: 9px; font-size: 23.500px; font-weight: 600; color: #383d3d; line-height: 30px; width: 154px; }
.links { display: flex; gap: 24.500px; }
.links .on { color: #1f2630; font-weight: 700; }
.signup { margin-left: auto; color: #18b26b; margin-right: 36px; }
.login { width: 72px; height: 38px; border-radius: 5px; background: #02b669; border: 1px solid #02a560; color: #fff; font-size: 16.500px; font-weight: 500; padding-bottom: 1px; }
.hero { display: flex; flex-direction: column; align-items: center; }
h1 { margin: 109px 0 0; font-size: 55px; line-height: 68px; font-weight: 700; }
.lead { margin: 25px 0 0; display: flex; flex-direction: column; align-items: center; font-size: 21.500px; line-height: 27.600px; font-weight: 600; }
.cta { margin-top: 24px; width: 135px; height: 42px; border-radius: 5px; background: #02b669; border: 1px solid #02a560; color: #fff; font-size: 18px; font-weight: 500; }
.note { margin: 12px 0 0; font-size: 14.800px; line-height: 18px; color: #8d8f99; }

.preview { position: relative; margin-top: 73px; width: 862px; height: 500px; flex: none; background: #f5f6f8; border: 1px solid #dcdddf; border-radius: 6px; box-shadow: 0 4px 32px rgba(0, 0, 0, .22); display: flex; }
.side { width: 176px; border-right: 1px solid #e9eaed; font-size: 10.200px; color: #5d6066; }
.side-brand { height: 56px; display: flex; align-items: center; gap: 6px; padding-left: 16px; font-size: 15px; font-weight: 600; color: #33383a; }
.group { border-top: 1px solid #e9eaed; padding: 7px 8px 7.500px 7px; }
.item { height: 31.200px; display: flex; align-items: center; border-radius: 3px; }
.item.active { background: #e9eaeb; color: #1f2226; font-weight: 700; }
.item.small { font-size: 9.500px; }
.item-icon { width: 35px; padding-right: 2px; display: flex; justify-content: center; }
.photo { width: 21px; height: 12px; flex: none; border-radius: 4px; background: linear-gradient(90deg, #1c1a12, #31301d 30%, #7a4a24 50%, #2d3a1f 70%, #182015); }
.content { flex: 1; padding: 30px 42px 0 42px; }
.head { height: 25px; display: flex; justify-content: space-between; align-items: center; }
h2 { margin: 0; font-size: 20px; line-height: 24px; font-weight: 600; }
.new { width: 84px; height: 24px; background: #02b669; border-radius: 3px; display: flex; align-items: center; justify-content: center; gap: 3px; color: #e6faf0; font-size: 9.400px; font-weight: 500; }
.filters { margin-top: 22px; height: 26px; display: flex; align-items: center; font-size: 10.300px; }
.search { width: 153px; height: 26px; background: #fff; border: 1px solid #e2e3e7; border-radius: 1px; display: flex; align-items: center; gap: 4px; padding-left: 6px; color: #b5b7bd; }
.show { margin-left: auto; margin-right: 6px; color: #55585e; font-size: 9.500px; }
.select { width: 97px; height: 26px; background: #fff; border: 1px solid #e2e3e7; border-radius: 1px; display: flex; align-items: center; justify-content: space-between; padding: 0 9px 0 8px; color: #26292e; }
.table { margin-top: 11px; background: #fff; width: 599px; border: 1px solid #eceef1; border-bottom-color: #dcdee2; border-top: 0; border-radius: 2px; }
.row { height: 42.600px; display: flex; align-items: center; padding: 1px 10px 0 11.500px; border-bottom: 1px solid #eff0f3; }
.row:last-child { border-bottom: 0; height: 41.600px; }
.name { font-size: 11px; line-height: 14px; font-weight: 600; color: #22252a; }
.name.italic { font-style: italic; }
.sub { font-size: 9.700px; line-height: 14px; color: #94969d; }
.tags { margin-left: auto; display: flex; gap: 4px; }
.tag { height: 15.500px; padding: 0 6px; background: #efeff2; color: #989aa1; font-size: 9.400px; line-height: 15.500px; border-radius: 1px; }
.tag.draft { background: #878a93; color: #f0f0f2; }
.tag.overdue { background: #ffcab8; color: #d94a30; }
.amount { margin-left: 13px; font-size: 10.900px; color: #4e5157; }
.play { position: absolute; left: 394px; top: 206px; }

.scrollbar { width: 15px; height: 886px; background: #f1f1f1; display: flex; flex-direction: column; align-items: center; }
.scrollbar .up { width: 0; height: 0; margin-top: 6px; border: 4px solid transparent; border-top: 0; border-bottom: 4px solid #a0a0a0; }
.thumb { width: 11px; height: 221px; margin-top: 5px; background: #c1c1c1; }
.scrollbar .down { width: 0; height: 0; margin-top: auto; margin-bottom: 6px; border: 4px solid transparent; border-bottom: 0; border-top: 4px solid #505050; }

.dock { height: 66px; margin-top: -1px; position: relative; flex: none; display: flex; align-items: center; border-top: 1px solid #121212; background:
  radial-gradient(ellipse 26px 30px at 1448px 8px, rgba(80, 80, 50, .4), transparent),
  radial-gradient(ellipse 90px 35px at 1810px 4px, rgba(110, 66, 20, .5), transparent),
  radial-gradient(ellipse 60px 30px at 1915px 62px, rgba(110, 60, 20, .4), transparent),
  radial-gradient(ellipse 100px 50px at 455px 50px, rgba(95, 75, 35, .6), transparent),
  radial-gradient(ellipse 60px 40px at 700px 40px, rgba(80, 66, 35, .6), transparent),
  radial-gradient(ellipse 70px 40px at 60px 20px, rgba(85, 72, 48, .5), transparent),
  radial-gradient(ellipse 60px 40px at 170px 20px, rgba(70, 58, 40, .5), transparent),
  linear-gradient(90deg, #372b1c 0, #2a211a 110px, #33281b 300px, #43351d 480px, #3b2f1e 640px, #2e2419 760px, #1b1716 880px, #191616 1300px, #1a1715 1600px, #221a14 1920px); }
.app { width: 70px; display: flex; justify-content: center; }
.tile { width: 62px; height: 62px; border-radius: 5px; display: flex; align-items: center; justify-content: center; position: relative; }
.tile.active { background: rgba(255, 255, 255, .2); }
.tile svg { margin-bottom: 3px; }
.dots { position: absolute; left: 0; right: 0; bottom: 0; display: flex; justify-content: center; gap: 3px; }
.dots i { width: 6px; height: 6px; border-radius: 50%; background: #e95420; }
.grid { margin-left: auto; margin-right: 20px; display: grid; grid-template-columns: repeat(3, 7px); gap: 4.600px; }
.grid i { width: 7px; height: 7px; border-radius: 2px; background: #f2f0ec; }
</style>
